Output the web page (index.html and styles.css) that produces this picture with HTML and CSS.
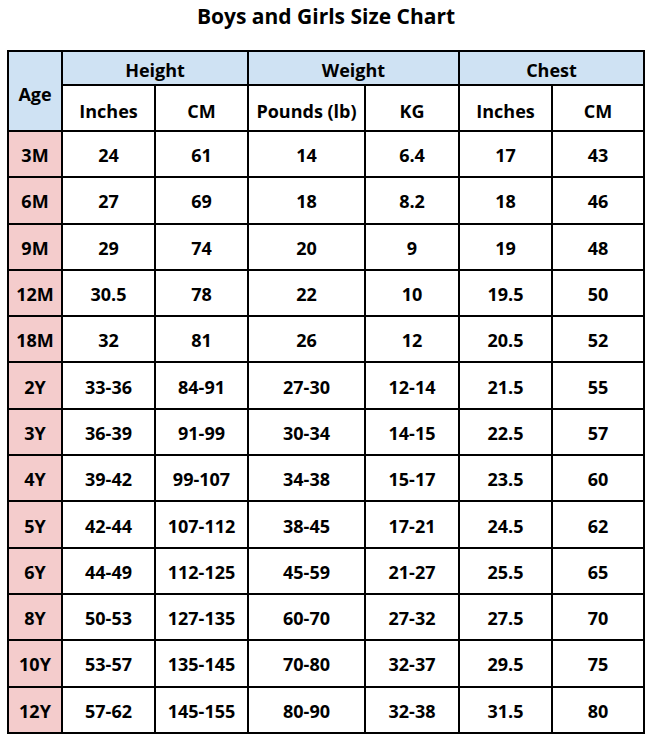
FILE: index.html
```html
<!DOCTYPE html>
<html lang="en">
<head>
<meta charset="utf-8">
<title>Boys and Girls Size Chart</title>
<link rel="stylesheet" href="styles.css">
</head>
<body>
<div class="page">
  <h1 class="title">Boys and Girls Size Chart</h1>
  <div class="chart">
    <div class="cell head age-head">Age</div>
    <div class="cell head span2">Height</div>
    <div class="cell head span2">Weight</div>
    <div class="cell head span2">Chest</div>
    <div class="cell sub">Inches</div>
    <div class="cell sub">CM</div>
    <div class="cell sub">Pounds (lb)</div>
    <div class="cell sub">KG</div>
    <div class="cell sub">Inches</div>
    <div class="cell sub">CM</div>

    <div class="cell age">3M</div><div class="cell">24</div><div class="cell">61</div><div class="cell">14</div><div class="cell">6.4</div><div class="cell">17</div><div class="cell">43</div>
    <div class="cell age">6M</div><div class="cell">27</div><div class="cell">69</div><div class="cell">18</div><div class="cell">8.2</div><div class="cell">18</div><div class="cell">46</div>
    <div class="cell age">9M</div><div class="cell">29</div><div class="cell">74</div><div class="cell">20</div><div class="cell">9</div><div class="cell">19</div><div class="cell">48</div>
    <div class="cell age">12M</div><div class="cell">30.5</div><div class="cell">78</div><div class="cell">22</div><div class="cell">10</div><div class="cell">19.5</div><div class="cell">50</div>
    <div class="cell age">18M</div><div class="cell">32</div><div class="cell">81</div><div class="cell">26</div><div class="cell">12</div><div class="cell">20.5</div><div class="cell">52</div>
    <div class="cell age">2Y</div><div class="cell">33-36</div><div class="cell">84-91</div><div class="cell">27-30</div><div class="cell">12-14</div><div class="cell">21.5</div><div class="cell">55</div>
    <div class="cell age">3Y</div><div class="cell">36-39</div><div class="cell">91-99</div><div class="cell">30-34</div><div class="cell">14-15</div><div class="cell">22.5</div><div class="cell">57</div>
    <div class="cell age">4Y</div><div class="cell">39-42</div><div class="cell">99-107</div><div class="cell">34-38</div><div class="cell">15-17</div><div class="cell">23.5</div><div class="cell">60</div>
    <div class="cell age">5Y</div><div class="cell">42-44</div><div class="cell">107-112</div><div class="cell">38-45</div><div class="cell">17-21</div><div class="cell">24.5</div><div class="cell">62</div>
    <div class="cell age">6Y</div><div class="cell">44-49</div><div class="cell">112-125</div><div class="cell">45-59</div><div class="cell">21-27</div><div class="cell">25.5</div><div class="cell">65</div>
    <div class="cell age">8Y</div><div class="cell">50-53</div><div class="cell">127-135</div><div class="cell">60-70</div><div class="cell">27-32</div><div class="cell">27.5</div><div class="cell">70</div>
    <div class="cell age">10Y</div><div class="cell">53-57</div><div class="cell">135-145</div><div class="cell">70-80</div><div class="cell">32-37</div><div class="cell">29.5</div><div class="cell">75</div>
    <div class="cell age">12Y</div><div class="cell">57-62</div><div class="cell">145-155</div><div class="cell">80-90</div><div class="cell">32-38</div><div class="cell">31.5</div><div class="cell">80</div>
  </div>
</div>
</body>
</html>
```
FILE: styles.css
```css
html, body {
  margin: 0;
  padding: 0;
  background: #ffffff;
}
body {
  font-family: "Open Sans", "Noto Sans", "Liberation Sans", sans-serif;
  color: #000000;
}
.page {
  width: 638px;
  margin-left: 7px;
}
.title {
  margin: 0 0 20px 0;
  padding-top: 1px;
  height: 29px;
  font-size: 21px;
  line-height: 30px;
  font-weight: 700;
  text-align: center;
}
.chart {
  display: grid;
  grid-template-columns: 54px 93px 93px 117px 94px 93px 92px;
  grid-template-rows: 34px 46px repeat(13, 46.3px);
  border-left: 2px solid #000;
  border-top: 2px solid #000;
  box-sizing: content-box;
  width: 636px;
}
.cell {
  box-sizing: border-box;
  border-right: 2px solid #000;
  border-bottom: 2px solid #000;
  display: flex;
  align-items: center;
  justify-content: center;
  padding-top: 2px;
  font-size: 18px;
  font-weight: 700;
  background: #ffffff;
}
.head {
  background: #cfe2f3;
  padding-top: 3px;
}
.sub {
  padding-top: 5px;
}
.age-head {
  grid-row: span 2;
  padding-top: 6px;
}
.span2 {
  grid-column: span 2;
}
.age {
  background: #f4cccc;
}
```
